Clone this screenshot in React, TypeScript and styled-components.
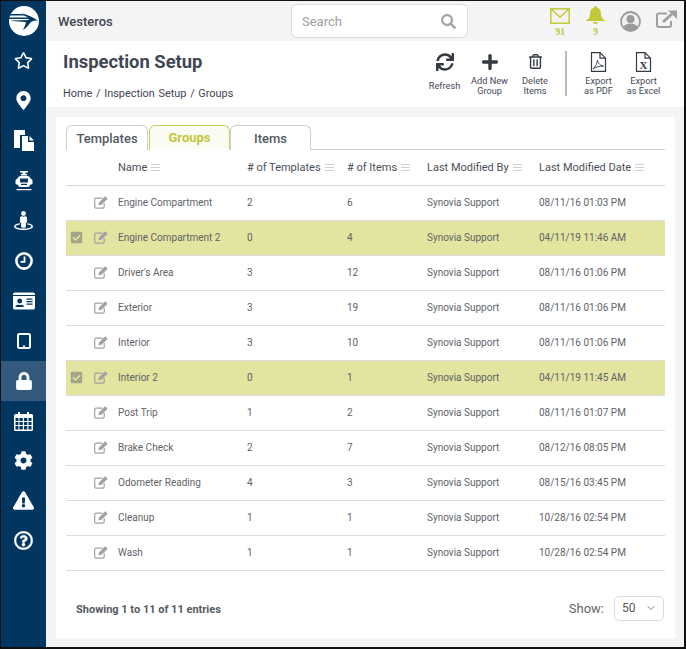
import React from 'react';
import styled, { createGlobalStyle } from 'styled-components';
import {
  FaRegStar, FaMapMarkerAlt, FaStreetView, FaIdCard, FaLock, FaCog,
  FaExclamationTriangle, FaRegQuestionCircle, FaSearch, FaSync, FaPlus, FaRegTrashAlt,
  FaCheckSquare,
} from 'react-icons/fa';
import { ChevronDown } from 'lucide-react';

const Global = createGlobalStyle`
  html, body { margin: 0; padding: 0; background: #000; }
  * { box-sizing: border-box; }
  body { font-family: Roboto, "Liberation Sans", sans-serif; }
`;
const Frame = styled.div`
  width: 686px; height: 649px; padding: 1px 2px 2px 1px; background: #111;
`;
const Shell = styled.div`
  display: flex; width: 100%; height: 100%; background: #f4f4f4; overflow: hidden;
`;
const Sidebar = styled.nav`
  width: 45px; flex: none; background: #003660; display: flex; flex-direction: column; align-items: center;
`;
const Logo = styled.div`
  height: 40px; width: 100%; display: flex; align-items: center; justify-content: center;
`;
const NavItem = styled.div<{ $active?: boolean; $size?: number }>`
  width: 100%; height: 40px; flex: none; display: flex; align-items: center; justify-content: center;
  padding-bottom: 1px; color: #fff; font-size: ${p => p.$size ?? 19}px;
  background: ${p => (p.$active ? '#33597c' : 'transparent')};
`;
const Main = styled.div`
  flex: 1; min-width: 0; display: flex; flex-direction: column;
`;
const TopBar = styled.header`
  height: 40px; flex: none; display: flex; align-items: center; padding: 0 0 0 12px;
`;
const Brand = styled.div`
  font-size: 13px; font-weight: 500; color: #3f4653; width: 233px;
`;
const Search = styled.div`
  width: 177px; height: 34px; background: #fff; border: 1px solid #dedede; border-radius: 6px;
  display: flex; align-items: center; justify-content: space-between; padding: 0 11px 0 10px;
  color: #a0a0a0; font-size: 13px; svg { color: #a8a8a8; font-size: 15px; }
`;
const Alerts = styled.div`
  margin-left: auto; height: 100%; display: flex; align-items: flex-start;
`;
const Alert = styled.div<{ $top: number }>`
  width: 35.4px; padding-top: ${p => p.$top}px; display: flex; flex-direction: column; align-items: center; color: #c3c83a;
  font-family: "Liberation Serif", serif; font-size: 9.5px; font-weight: 700; line-height: 10px;
`;
const AlertCount = styled.span`
  margin-top: 3px;
`;
const Header = styled.section`
  height: 66px; flex: none; background: #fff; display: flex; justify-content: space-between; padding: 0 0 0 17px;
`;
const Title = styled.h1`
  margin: 9px 0 0; font-size: 18.4px; line-height: 24px; font-weight: 700; color: #3f4653;
`;
const Crumbs = styled.div`
  margin-top: 13px; font-size: 10.9px; line-height: 14px; color: #3f4653; word-spacing: 1px;
`;
const Actions = styled.div`
  display: flex; align-items: flex-start; padding-right: 18px;
`;
const Action = styled.div<{ $w: number }>`
  width: ${p => p.$w}px; display: flex; flex-direction: column; align-items: center; text-align: center;
  font-size: 9.2px; line-height: 10px; color: #454a56; padding-top: 10px;
`;
const ActionIcon = styled.div<{ $s?: number }>`
  height: 21px; display: flex; align-items: center; color: #343a44; font-size: ${p => p.$s ?? 18}px;
`;
const ActionText = styled.div<{ $single?: boolean }>`
  margin-top: ${p => (p.$single ? 9 : 4)}px;
`;
const Divider = styled.div`
  width: 2px; height: 45px; margin: 10px 9px 0 7px; background: #bdbdbd;
`;
const Card = styled.section`
  margin: 10px 9px 9px 10px; flex: 1; background: #fff; padding: 8px 10px 0; display: flex; flex-direction: column;
`;
const Tabs = styled.div`
  display: flex; height: 25px; flex: none; border-bottom: 1px solid #cfcfcf;
`;
const Tab = styled.div<{ $active?: boolean; $w: number; $gap?: number }>`
  width: ${p => p.$w}px; height: 25px; margin-right: ${p => p.$gap ?? 0}px;
  border: 1px solid ${p => (p.$active ? '#c9cc62' : '#cfcfcf')}; border-bottom: ${p => (p.$active ? '1px solid #fff' : '0')};
  border-radius: 6px 6px 0 0; display: flex; align-items: center; justify-content: center;
  font-size: 13px; background: ${p => (p.$active ? '#fafbf2' : '#fff')}; color: ${p => (p.$active ? '#c3c83a' : '#545a64')};
  font-weight: ${p => (p.$active ? 700 : 500)};
`;
const Table = styled.table`
  width: 599px; border-collapse: collapse; table-layout: fixed;
`;
const Th = styled.th<{ $w: number }>`
  width: ${p => p.$w}px; height: 35px; padding: 0; text-align: left; font-size: 11px; font-weight: 400; color: #4a4f59;
  border-bottom: 1px solid #d8d8d8; white-space: nowrap;
`;
const Row = styled.tr<{ $sel?: boolean }>`
  height: 35px; background: ${p => (p.$sel ? '#e3e49f' : '#fff')};
`;
const Td = styled.td`
  padding: 0; font-size: 10px; color: #5f6368; border-bottom: 1px solid #dcdcdc; white-space: nowrap;
`;
const HeadLines = styled.span`
  display: inline-block; width: 9px; height: 7px; margin-left: 4px; vertical-align: 0;
  background: repeating-linear-gradient(to bottom, #cfcfcf 0 1px, transparent 1px 3px);
`;
const CheckCell = styled.div`
  padding-left: 4px; display: flex; align-items: center; color: #a3a48a; font-size: 13px;
`;
const EditCell = styled.div`
  padding-left: 6px; display: flex; align-items: center;
`;
const Footer = styled.div`
  display: flex; align-items: center; justify-content: space-between; margin-top: 25px; padding: 0 1px 0 10px;
`;
const Entries = styled.div`
  font-size: 11px; font-weight: 700; color: #555a62; padding-top: 3px;
`;
const Show = styled.div`
  display: flex; align-items: center; gap: 10px; font-size: 13px; color: #666;
`;
const Select = styled.div`
  width: 50px; height: 25px; border: 1px solid #dcdcdc; border-radius: 5px; display: flex; align-items: center;
  justify-content: space-between; padding: 0 6px 0 7px; font-size: 12px; color: #555;
`;
const FileLetter = styled.text`
  font-family: "Liberation Serif", serif; font-size: 11px; font-weight: 700; fill: #343a44;
`;

const rows = [
  ['Engine Compartment', '2', '6', '08/11/16 01:03 PM'],
  ['Engine Compartment 2', '0', '4', '04/11/19 11:46 AM', 1],
  ["Driver's Area", '3', '12', '08/11/16 01:06 PM'],
  ['Exterior', '3', '19', '08/11/16 01:06 PM'],
  ['Interior', '3', '10', '08/11/16 01:06 PM'],
  ['Interior 2', '0', '1', '04/11/19 11:45 AM', 1],
  ['Post Trip', '1', '2', '08/11/16 01:07 PM'],
  ['Brake Check', '2', '7', '08/12/16 08:05 PM'],
  ['Odometer Reading', '4', '3', '08/15/16 03:45 PM'],
  ['Cleanup', '1', '1', '10/28/16 02:54 PM'],
  ['Wash', '1', '1', '10/28/16 02:54 PM'],
] as const;

const LogoMark = () => (
  <svg width="30" height="30" viewBox="0 0 30 30">
    <circle cx="15" cy="15" r="15" fill="#fff" />
    <path d="M1 8 H12 L18 9.6 H1 Z M0 11.5 H18 L20 13 H0 Z" fill="#003660" />
    <path d="M12 7.5 C17 8 24 11 29.5 15 C25.5 14 23 15 21 17 C19 20 17 22 14 24 C15.5 21 16.5 18.5 17 16 L3 15 L2 14.4 L20 14 L18 11 Z" fill="#003660" />
  </svg>
);
const Envelope = () => (
  <svg width="20" height="16" viewBox="0 0 20 16" fill="none" stroke="#c3c83a" strokeWidth="1.5">
    <rect x="0.8" y="0.8" width="18.4" height="14.4" />
    <path d="M1 1 L10 9 L19 1" />
  </svg>
);
const Bell = () => (
  <svg width="19" height="18" viewBox="0 0 19 18" fill="#c3c83a">
    <path d="M9.5 0 C10.5 0 11 .8 11 1.6 C14 2.4 15 5 15 8 C15 11 16 13 19 14.5 V15 H0 V14.5 C3 13 4 11 4 8 C4 5 5 2.4 8 1.6 C8 .8 8.5 0 9.5 0 Z" />
    <path d="M7 16 H12 C12 17.2 11 18 9.5 18 C8 18 7 17.2 7 16 Z" />
  </svg>
);
const UserRing = () => (
  <svg width="21" height="21" viewBox="0 0 21 21">
    <circle cx="10.5" cy="10.5" r="9.5" fill="#f0f0f0" stroke="#9a9a9a" strokeWidth="1.8" />
    <circle cx="10.5" cy="8" r="4" fill="#9a9a9a" />
    <path d="M3.4 16.5 C4.5 13.5 7 12.5 10.5 12.5 C14 12.5 16.5 13.5 17.6 16.5 C15.8 18.6 13.3 19.8 10.5 19.8 C7.7 19.8 5.2 18.6 3.4 16.5 Z" fill="#9a9a9a" />
  </svg>
);
const ExternalIcon = () => (
  <svg width="21" height="18" viewBox="0 0 21 18" fill="none" stroke="#a0a0a0" strokeWidth="2">
    <path d="M11 3.5 H3 Q1 3.5 1 5.5 V15 Q1 17 3 17 H13 Q15 17 15 15 V11" />
    <path d="M7 12 L17 3" strokeWidth="3" />
    <path d="M12 0.5 H21 V9 Z" fill="#a0a0a0" stroke="none" />
  </svg>
);
const Tablet = () => (
  <svg width="14" height="16" viewBox="0 0 14 16">
    <rect x="1" y="1" width="12" height="14" rx="1.2" fill="none" stroke="#fff" strokeWidth="2" />
    <rect x="6" y="12.5" width="2" height="1.5" fill="#fff" />
  </svg>
);
const Copy = () => (
  <svg width="22" height="21" viewBox="0 0 22 21" fill="#fff">
    <path d="M1 0 H12 V5 H7 V18 H1 Z" />
    <path d="M9 6 H15 V12 H21 V21 H9 Z" />
    <path d="M16.5 6 L21 10.5 H16.5 Z" />
  </svg>
);
const Train = () => (
  <svg width="18" height="20" viewBox="0 0 18 20" fill="#fff">
    <path d="M5 0 H13 V1.5 H10.5 V3 H12 V4.5 H6 V3 H7.5 V1.5 H5 Z" />
    <path d="M3 7 Q3 5 6 5 H12 Q15 5 15 7 L17.5 9 V13 L15 14 Q15 16 13 16 H5 Q3 16 3 14 L.5 13 V9 Z M5 7.5 V11.5 H13 V7.5 Z" fillRule="evenodd" />
    <path d="M6 12.8 H12 V14 H6 Z" fill="#003660" />
    <path d="M1.5 18 H16.5 V19.2 H1.5 Z" />
  </svg>
);
const Clock = () => (
  <svg width="18" height="18" viewBox="0 0 18 18" fill="none" stroke="#fff">
    <circle cx="9" cy="9" r="7.6" strokeWidth="2.6" />
    <path d="M9.5 4.5 V9.8 H5.5" strokeWidth="1.8" />
  </svg>
);
const Calendar = () => (
  <svg width="19" height="20" viewBox="0 0 19 20" fill="#fff">
    <path d="M1.5 3 H4 V1 H6 V3 H13 V1 H15 V3 H17.5 Q19 3 19 4.5 V18.5 Q19 20 17.5 20 H1.5 Q0 20 0 18.5 V4.5 Q0 3 1.5 3 Z" />
    <path d="M1.5 7 H4.5 V10 H1.5 Z M5.5 7 H8.8 V10 H5.5 Z M10 7 H13.3 V10 H10 Z M14.5 7 H17.5 V10 H14.5 Z M1.5 11 H4.5 V14 H1.5 Z M5.5 11 H8.8 V14 H5.5 Z M10 11 H13.3 V14 H10 Z M14.5 11 H17.5 V14 H14.5 Z M1.5 15 H4.5 V18.5 H1.5 Z M5.5 15 H8.8 V18.5 H5.5 Z M10 15 H13.3 V18.5 H10 Z M14.5 15 H17.5 V18.5 H14.5 Z" fill="#003660" />
  </svg>
);
const FileOutline = () => (
  <>
    <path d="M1.5 .7 H10 L15.5 6.2 V19.3 H1.5 Z" fill="#fff" stroke="#343a44" strokeWidth="1.2" />
    <path d="M10 .7 V6.2 H15.5" fill="none" stroke="#343a44" strokeWidth="1.2" />
  </>
);
const PdfFile = () => (
  <svg width="17" height="20" viewBox="0 0 17 20">
    <FileOutline />
    <path d="M3 17 C5.5 15 7.5 10.5 7.5 8 C7.5 10 9.5 13.5 13.5 14.2 C10 13.8 6 15 3 17 Z" fill="none" stroke="#343a44" strokeWidth="0.9" />
  </svg>
);
const ExcelFile = () => (
  <svg width="17" height="20" viewBox="0 0 17 20">
    <FileOutline />
    <FileLetter x="4.4" y="17">X</FileLetter>
  </svg>
);
const EditIcon = () => (
  <svg width="14" height="13" viewBox="0 0 14 13">
    <path d="M8.5 2.2 H2 Q.7 2.2 .7 3.5 V10.8 Q.7 12.2 2 12.2 H8.8 Q10.2 12.2 10.2 10.8 V7" fill="none" stroke="#a2a2a2" strokeWidth="1.2" />
    <path d="M4.4 9.2 L5 6.4 L10.6 .8 Q11.2 .3 11.8 .8 L13.2 2.2 Q13.6 2.8 13.2 3.3 L7.5 8.8 Z" fill="#a2a2a2" />
  </svg>
);

export default function App() {
  return (
    <Frame>
      <Global />
      <Shell>
        <Sidebar>
          <Logo><LogoMark /></Logo>
          <NavItem><FaRegStar /></NavItem>
          <NavItem><FaMapMarkerAlt /></NavItem>
          <NavItem><Copy /></NavItem>
          <NavItem><Train /></NavItem>
          <NavItem><FaStreetView /></NavItem>
          <NavItem><Clock /></NavItem>
          <NavItem $size={22}><FaIdCard /></NavItem>
          <NavItem><Tablet /></NavItem>
          <NavItem $active $size={18}><FaLock /></NavItem>
          <NavItem><Calendar /></NavItem>
          <NavItem><FaCog /></NavItem>
          <NavItem $size={21}><FaExclamationTriangle /></NavItem>
          <NavItem><FaRegQuestionCircle stroke="#fff" strokeWidth={12} /></NavItem>
        </Sidebar>
        <Main>
          <TopBar>
            <Brand>Westeros</Brand>
            <Search>Search<FaSearch /></Search>
            <Alerts>
              <Alert $top={7}><Envelope /><AlertCount>91</AlertCount></Alert>
              <Alert $top={5}><Bell /><AlertCount>9</AlertCount></Alert>
              <Alert $top={10}><UserRing /></Alert>
              <Alert $top={9}><ExternalIcon /></Alert>
            </Alerts>
          </TopBar>
          <Header>
            <div>
              <Title>Inspection Setup</Title>
              <Crumbs>Home / Inspection Setup / Groups</Crumbs>
            </div>
            <Actions>
              <Action $w={45}><ActionIcon><FaSync /></ActionIcon><ActionText $single>Refresh</ActionText></Action>
              <Action $w={45}><ActionIcon><FaPlus /></ActionIcon><ActionText>Add New<br />Group</ActionText></Action>
              <Action $w={46}><ActionIcon><FaRegTrashAlt size={15} /></ActionIcon><ActionText>Delete<br />Items</ActionText></Action>
              <Divider />
              <Action $w={45}><ActionIcon><PdfFile /></ActionIcon><ActionText>Export<br />as PDF</ActionText></Action>
              <Action $w={45}><ActionIcon><ExcelFile /></ActionIcon><ActionText>Export<br />as Excel</ActionText></Action>
            </Actions>
          </Header>
          <Card>
            <Tabs>
              <Tab $w={82} $gap={1}>Templates</Tab>
              <Tab $w={81} $active>Groups</Tab>
              <Tab $w={81}>Items</Tab>
            </Tabs>
            <Table>
              <thead>
                <tr>
                  <Th $w={22} /><Th $w={30} />
                  <Th $w={129}>Name<HeadLines /></Th>
                  <Th $w={100}># of Templates<HeadLines /></Th>
                  <Th $w={80}># of Items<HeadLines /></Th>
                  <Th $w={112}>Last Modified By<HeadLines /></Th>
                  <Th $w={126}>Last Modified Date<HeadLines /></Th>
                </tr>
              </thead>
              <tbody>
                {rows.map(r => (
                  <Row key={r[0]} $sel={r.length > 4}>
                    <Td><CheckCell>{r.length > 4 && <FaCheckSquare />}</CheckCell></Td>
                    <Td><EditCell><EditIcon /></EditCell></Td>
                    <Td>{r[0]}</Td>
                    <Td>{r[1]}</Td>
                    <Td>{r[2]}</Td>
                    <Td>Synovia Support</Td>
                    <Td>{r[3]}</Td>
                  </Row>
                ))}
              </tbody>
            </Table>
            <Footer>
              <Entries>Showing 1 to 11 of 11 entries</Entries>
              <Show>Show:<Select>50<ChevronDown size={12} strokeWidth={1.5} /></Select></Show>
            </Footer>
          </Card>
        </Main>
      </Shell>
    </Frame>
  );
}
